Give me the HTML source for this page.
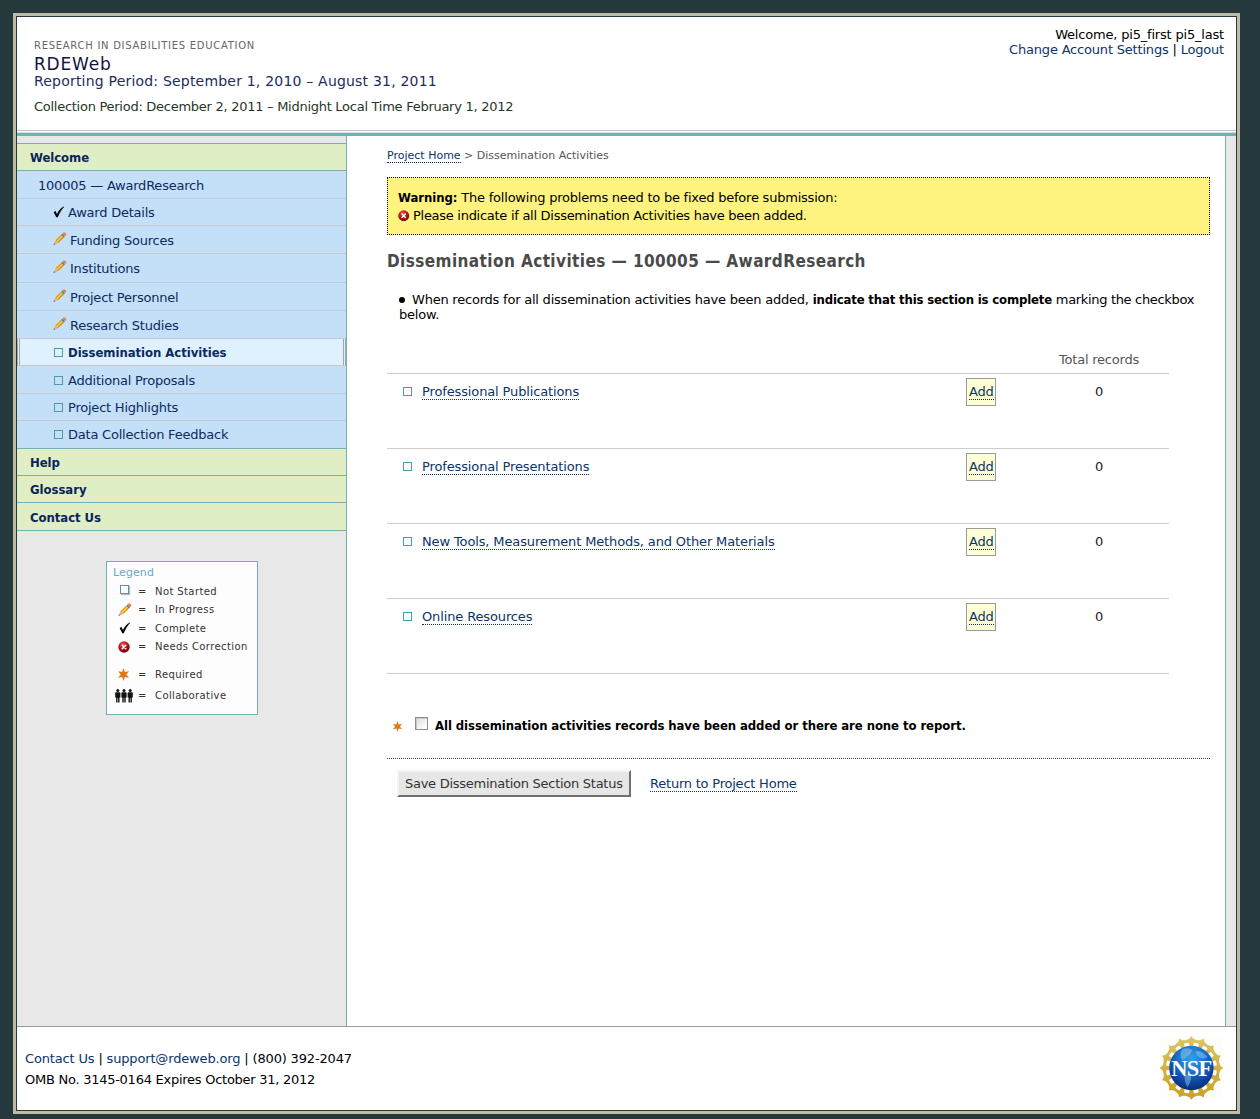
<!DOCTYPE html>
<html lang="en">
<head>
<meta charset="utf-8">
<title>RDEWeb - Dissemination Activities</title>
<style>
html,body{margin:0;padding:0;}
body{background:#25383c;font-family:"DejaVu Sans","Liberation Sans",sans-serif;font-size:13px;color:#000;letter-spacing:-0.22px;width:1260px;height:1119px;overflow:hidden;position:relative;}
.abs{position:absolute;}
a{color:#0b3468;text-decoration:none;}
a.dot{border-bottom:1px dotted #0b3468;}
.b{font-family:"DejaVu Sans Condensed","DejaVu Sans","Liberation Sans",sans-serif;font-weight:bold;font-stretch:condensed;letter-spacing:-0.05px;}
#frame{left:13px;top:13px;width:1221px;height:1095px;border:3px solid #bebca7;background:#fff;}
#frame2{left:16px;top:16px;width:1219px;height:1093px;border:1px solid #25383c;background:#fff;}
.t{white-space:nowrap;line-height:18px;}
/* header */
#h0{left:34px;top:37px;font-size:10px;color:#666;letter-spacing:0.72px;}
#h1{left:34px;top:53px;font-size:17px;color:#14143c;line-height:22px;letter-spacing:0.8px;}
#h2{left:34px;top:71px;font-size:14px;color:#1c2c5c;line-height:20px;letter-spacing:0.2px;}
#h3{left:34px;top:98px;font-size:13px;color:#263626;letter-spacing:-0.27px;}
#u1{right:36px;top:27px;text-align:right;line-height:15px;letter-spacing:-0.19px;}
/* sidebar */
#side{left:17px;top:136px;width:329px;height:890px;background:#e8e8e8;border-right:1px solid #72b0b4;}
.nav{position:absolute;left:17px;width:329px;box-sizing:border-box;}
.nav.g{background:#e0eec6;border-bottom:1px solid #72b0b4;}
.nav.bl{background:#c4e0f8;border-bottom:1px solid #c9c9c9;}
.nav .t{position:absolute;color:#0c2a5e;}
.nav.g .t{left:13px;color:#0a2458;}

.nav.last{border-bottom-color:#72b0b4;}
.nav.act{background:#dff0ff;border-bottom:1px solid #c9c9c9;border-left:3px double #a6a6a6;border-right:3px double #a6a6a6;}
.sq{position:absolute;width:7px;height:7px;border:1px solid #4a9ba2;}

.sq.w{background:#fff;}
.addb{box-sizing:border-box;width:30px;height:28px;border:1px solid #9a9a9a;background:#ffffd6;padding:5px 0 0 2px;line-height:16px;white-space:nowrap;}
.cb{box-sizing:border-box;width:13px;height:13px;border:1px solid #8a8f94;background:linear-gradient(135deg,#dcdcdc 0%,#f4f4f4 60%,#fff 100%);box-shadow:inset 1px 1px 0 #c8c8c8;}
.btn{box-sizing:border-box;width:234px;height:27px;background:#e6e6e6;border:2px solid;border-color:#f4f4f4 #707070 #707070 #f4f4f4;color:#333;padding:4px 0 0 6px;line-height:16px;letter-spacing:-0.27px;}

.lg{font-size:10px;letter-spacing:0.4px;color:#333;}
</style>
</head>
<body>
<div class="abs" id="frame"></div>
<div class="abs" id="frame2"></div>
<!-- HEADER -->
<div class="abs t" id="h0">RESEARCH IN DISABILITIES EDUCATION</div>
<div class="abs t" id="h1">RDEWeb</div>
<div class="abs t" id="h2">Reporting Period: September 1, 2010 – August 31, 2011</div>
<div class="abs t" id="h3">Collection Period: December 2, 2011 – Midnight Local Time February 1, 2012</div>
<div class="abs t" id="u1">Welcome, pi5_first pi5_last<br><a>Change Account Settings</a> | <a>Logout</a></div>
<div class="abs" style="left:17px;top:130px;width:1219px;height:1px;background:#c6c6c6"></div>
<div class="abs" style="left:17px;top:132px;width:1219px;height:1px;background:#dcdcdc"></div>
<div class="abs" style="left:17px;top:133px;width:1219px;height:3px;background:#72b0b4"></div>
<!-- SIDEBAR -->
<div class="abs" id="side"></div>
<!--NAVSTART-->
<div class="abs" style="left:17px;top:143px;width:329px;height:1px;background:#72b0b4"></div>
<div class="nav g" style="top:144px;height:27px"><span class="t b" style="left:13px;top:5px">Welcome</span></div>
<div class="nav bl" style="top:171px;height:28px"><span class="t" style="left:21px;top:6px">100005 — AwardResearch</span></div>
<div class="nav bl" style="top:199px;height:27px"><svg class="abs" style="left:36px;top:7px" width="12" height="12" viewBox="0 0 12 12"><path d="M0.7,6.3 L2.3,4.7 L4.0,7.9 C5.6,4.6 8,2 10.7,0.5 L11.1,1.1 C8.6,3.6 6.5,7 4.8,11.3 L3.3,11.3 Z" fill="#000"/></svg><span class="t" style="left:51px;top:5px">Award Details</span></div>
<div class="nav bl" style="top:226px;height:28px"><svg class="abs" style="left:36px;top:6px" width="14" height="14" viewBox="0 0 14 14"><g transform="translate(0.3,13.1) rotate(-44.5)"><path d="M0,0 L2.2,-0.8 L2.2,0.8 Z" fill="#5f5f5f"/><path d="M2.2,-0.8 L4.9,-1.9 L4.9,1.9 L2.2,0.8 Z" fill="#dfae8c"/><rect x="4.9" y="-1.9" width="8" height="1.3" fill="#f08f0c"/><rect x="4.9" y="-0.6" width="8" height="1.3" fill="#ffd21e"/><rect x="4.9" y="0.7" width="8" height="1.2" fill="#e07f00"/><rect x="12.9" y="-1.9" width="1.5" height="3.8" fill="#3a89a2"/><path d="M14.4,-1.9 L16,-1.9 Q17.1,-1.9 17.1,0 Q17.1,1.9 16,1.9 L14.4,1.9 Z" fill="#f07f40"/></g></svg><span class="t" style="left:53px;top:6px">Funding Sources</span></div>
<div class="nav bl" style="top:254px;height:29px"><svg class="abs" style="left:36px;top:6px" width="14" height="14" viewBox="0 0 14 14"><g transform="translate(0.3,13.1) rotate(-44.5)"><path d="M0,0 L2.2,-0.8 L2.2,0.8 Z" fill="#5f5f5f"/><path d="M2.2,-0.8 L4.9,-1.9 L4.9,1.9 L2.2,0.8 Z" fill="#dfae8c"/><rect x="4.9" y="-1.9" width="8" height="1.3" fill="#f08f0c"/><rect x="4.9" y="-0.6" width="8" height="1.3" fill="#ffd21e"/><rect x="4.9" y="0.7" width="8" height="1.2" fill="#e07f00"/><rect x="12.9" y="-1.9" width="1.5" height="3.8" fill="#3a89a2"/><path d="M14.4,-1.9 L16,-1.9 Q17.1,-1.9 17.1,0 Q17.1,1.9 16,1.9 L14.4,1.9 Z" fill="#f07f40"/></g></svg><span class="t" style="left:53px;top:6px">Institutions</span></div>
<div class="nav bl" style="top:283px;height:28px"><svg class="abs" style="left:36px;top:6px" width="14" height="14" viewBox="0 0 14 14"><g transform="translate(0.3,13.1) rotate(-44.5)"><path d="M0,0 L2.2,-0.8 L2.2,0.8 Z" fill="#5f5f5f"/><path d="M2.2,-0.8 L4.9,-1.9 L4.9,1.9 L2.2,0.8 Z" fill="#dfae8c"/><rect x="4.9" y="-1.9" width="8" height="1.3" fill="#f08f0c"/><rect x="4.9" y="-0.6" width="8" height="1.3" fill="#ffd21e"/><rect x="4.9" y="0.7" width="8" height="1.2" fill="#e07f00"/><rect x="12.9" y="-1.9" width="1.5" height="3.8" fill="#3a89a2"/><path d="M14.4,-1.9 L16,-1.9 Q17.1,-1.9 17.1,0 Q17.1,1.9 16,1.9 L14.4,1.9 Z" fill="#f07f40"/></g></svg><span class="t" style="left:53px;top:6px">Project Personnel</span></div>
<div class="nav bl" style="top:311px;height:28px"><svg class="abs" style="left:36px;top:6px" width="14" height="14" viewBox="0 0 14 14"><g transform="translate(0.3,13.1) rotate(-44.5)"><path d="M0,0 L2.2,-0.8 L2.2,0.8 Z" fill="#5f5f5f"/><path d="M2.2,-0.8 L4.9,-1.9 L4.9,1.9 L2.2,0.8 Z" fill="#dfae8c"/><rect x="4.9" y="-1.9" width="8" height="1.3" fill="#f08f0c"/><rect x="4.9" y="-0.6" width="8" height="1.3" fill="#ffd21e"/><rect x="4.9" y="0.7" width="8" height="1.2" fill="#e07f00"/><rect x="12.9" y="-1.9" width="1.5" height="3.8" fill="#3a89a2"/><path d="M14.4,-1.9 L16,-1.9 Q17.1,-1.9 17.1,0 Q17.1,1.9 16,1.9 L14.4,1.9 Z" fill="#f07f40"/></g></svg><span class="t" style="left:53px;top:6px">Research Studies</span></div>
<div class="nav act" style="top:339px;height:27px"><span class="sq" style="left:34px;top:9px"></span><span class="t b" style="left:48px;top:5px">Dissemination Activities</span></div>
<div class="nav bl" style="top:366px;height:28px"><span class="sq" style="left:37px;top:10px"></span><span class="t" style="left:51px;top:6px">Additional Proposals</span></div>
<div class="nav bl" style="top:394px;height:27px"><span class="sq" style="left:37px;top:9px"></span><span class="t" style="left:51px;top:5px">Project Highlights</span></div>
<div class="nav bl last" style="top:421px;height:28px"><span class="sq" style="left:37px;top:9px"></span><span class="t" style="left:51px;top:5px">Data Collection Feedback</span></div>
<div class="nav g" style="top:449px;height:27px"><span class="t b" style="left:13px;top:5px">Help</span></div>
<div class="nav g" style="top:476px;height:27px"><span class="t b" style="left:13px;top:5px">Glossary</span></div>
<div class="nav g" style="top:503px;height:28px"><span class="t b" style="left:13px;top:6px">Contact Us</span></div>
<!--NAVEND-->
<!--MAINSTART-->
<div class="abs t" style="left:387px;top:147px;font-size:11px;color:#555;letter-spacing:0px"><a class="dot" style="padding-bottom:0">Project Home</a> &gt; Dissemination Activities</div>
<div class="abs" style="left:387px;top:177px;width:821px;height:56px;border:1px dotted #000;background:#fff380"></div>
<div class="abs t" style="left:398px;top:189px"><span class="b">Warning:</span> The following problems need to be fixed before submission:</div>
<svg class="abs" style="left:398px;top:209.5px" width="11.5" height="11.5" viewBox="0 0 12 12"><defs><radialGradient id="rg1" cx="0.4" cy="0.3" r="0.75"><stop offset="0" stop-color="#ee5f60"/><stop offset="0.45" stop-color="#c4141c"/><stop offset="1" stop-color="#5e0006"/></radialGradient></defs><circle cx="6" cy="6" r="5.7" fill="url(#rg1)"/><path d="M4.2,4.2 L7.8,7.8 M7.8,4.2 L4.2,7.8" stroke="#fff" stroke-width="1.5" stroke-linecap="round"/></svg>
<div class="abs t" style="left:413px;top:207px;letter-spacing:-0.28px">Please indicate if all Dissemination Activities have been added.</div>
<div class="abs t b" style="left:387px;top:250px;font-size:17px;line-height:22px;color:#4a4a4a;letter-spacing:0.41px">Dissemination Activities — 100005 — AwardResearch</div>
<div class="abs" style="left:399px;top:297px;width:6px;height:6px;border-radius:3px;background:#000"></div>
<div class="abs t" style="left:412px;top:291px">When records for all dissemination activities have been added, <span class="b" style="letter-spacing:-0.16px">indicate that this section is complete</span><span style="letter-spacing:-0.33px"> marking the checkbox</span></div>
<div class="abs t" style="left:399px;top:306px">below.</div>
<div class="abs t" style="left:1039px;width:120px;text-align:center;top:351px;color:#555">Total records</div>
<div class="abs" style="left:387px;top:373px;width:782px;height:1px;background:#cdcdcd"></div>
<div class="abs" style="left:387px;top:448px;width:782px;height:1px;background:#cdcdcd"></div>
<div class="abs" style="left:387px;top:523px;width:782px;height:1px;background:#cdcdcd"></div>
<div class="abs" style="left:387px;top:598px;width:782px;height:1px;background:#cdcdcd"></div>
<div class="abs" style="left:387px;top:673px;width:782px;height:1px;background:#cdcdcd"></div>
<span class="sq w" style="left:403px;top:387px"></span>
<div class="abs t" style="left:422px;top:383px;letter-spacing:-0.13px"><a class="dot">Professional Publications</a></div>
<div class="abs addb" style="left:966px;top:378px"><a class="dot">Add</a></div>
<div class="abs t" style="left:1079px;width:40px;text-align:center;top:383px;color:#222">0</div>
<span class="sq w" style="left:403px;top:462px"></span>
<div class="abs t" style="left:422px;top:458px;letter-spacing:-0.13px"><a class="dot">Professional Presentations</a></div>
<div class="abs addb" style="left:966px;top:453px"><a class="dot">Add</a></div>
<div class="abs t" style="left:1079px;width:40px;text-align:center;top:458px;color:#222">0</div>
<span class="sq w" style="left:403px;top:537px"></span>
<div class="abs t" style="left:422px;top:533px;letter-spacing:-0.13px"><a class="dot">New Tools, Measurement Methods, and Other Materials</a></div>
<div class="abs addb" style="left:966px;top:528px"><a class="dot">Add</a></div>
<div class="abs t" style="left:1079px;width:40px;text-align:center;top:533px;color:#222">0</div>
<span class="sq w" style="left:403px;top:612px"></span>
<div class="abs t" style="left:422px;top:608px;letter-spacing:-0.13px"><a class="dot">Online Resources</a></div>
<div class="abs addb" style="left:966px;top:603px"><a class="dot">Add</a></div>
<div class="abs t" style="left:1079px;width:40px;text-align:center;top:608px;color:#222">0</div>
<svg class="abs" style="left:392px;top:721px" width="11" height="11" viewBox="-6 -6 12 12"><path d="M0,-5.9 L1.3,-2.2 L5.1,-3 L2.6,0 L5.1,3 L1.3,2.2 L0,5.9 L-1.3,2.2 L-5.1,3 L-2.6,0 L-5.1,-3 L-1.3,-2.2 Z" fill="#df7a1c"/></svg>
<div class="abs cb" style="left:415px;top:717px"></div>
<div class="abs t b" style="left:435px;top:717px;letter-spacing:-0.08px">All dissemination activities records have been added or there are none to report.</div>
<div class="abs" style="left:387px;top:758px;width:823px;height:0;border-top:1px dotted #444"></div>
<div class="abs btn t" style="left:397px;top:770px">Save Dissemination Section Status</div>
<div class="abs t" style="left:650px;top:775px"><a class="dot">Return to Project Home</a></div>
<div class="abs" style="left:1225px;top:136px;width:1px;height:890px;background:#72b0b4"></div>
<div class="abs" style="left:1226px;top:136px;width:10px;height:890px;background:#e8e8e8"></div>
<!--MAINEND-->
<!--FOOTSTART-->
<div class="abs" style="left:106px;top:561px;width:150px;height:152px;border:1px solid #72b0b4;background:#fdfdfd"></div>
<div class="abs t" style="left:113px;top:564px;font-size:11px;color:#6ba7c9;letter-spacing:0.1px">Legend</div>
<div class="abs t lg" style="left:138px;top:583px">=</div>
<div class="abs t lg" style="left:155px;top:583px">Not Started</div>
<div class="abs t lg" style="left:138px;top:601px">=</div>
<div class="abs t lg" style="left:155px;top:601px">In Progress</div>
<div class="abs t lg" style="left:138px;top:620px">=</div>
<div class="abs t lg" style="left:155px;top:620px">Complete</div>
<div class="abs t lg" style="left:138px;top:638px">=</div>
<div class="abs t lg" style="left:155px;top:638px">Needs Correction</div>
<div class="abs t lg" style="left:138px;top:666px">=</div>
<div class="abs t lg" style="left:155px;top:666px">Required</div>
<div class="abs t lg" style="left:138px;top:687px">=</div>
<div class="abs t lg" style="left:155px;top:687px">Collaborative</div>
<span class="sq w" style="left:120px;top:585px;box-shadow:1px 1px 1px #bbb"></span>
<svg class="abs" style="left:118px;top:603px" width="14" height="14" viewBox="0 0 14 14"><g transform="translate(0.3,13.1) rotate(-44.5)"><path d="M0,0 L2.2,-0.8 L2.2,0.8 Z" fill="#5f5f5f"/><path d="M2.2,-0.8 L4.9,-1.9 L4.9,1.9 L2.2,0.8 Z" fill="#dfae8c"/><rect x="4.9" y="-1.9" width="8" height="1.3" fill="#f08f0c"/><rect x="4.9" y="-0.6" width="8" height="1.3" fill="#ffd21e"/><rect x="4.9" y="0.7" width="8" height="1.2" fill="#e07f00"/><rect x="12.9" y="-1.9" width="1.5" height="3.8" fill="#3a89a2"/><path d="M14.4,-1.9 L16,-1.9 Q17.1,-1.9 17.1,0 Q17.1,1.9 16,1.9 L14.4,1.9 Z" fill="#f07f40"/></g></svg>
<svg class="abs" style="left:119px;top:622px" width="12" height="12" viewBox="0 0 12 12"><path d="M0.7,6.3 L2.3,4.7 L4.0,7.9 C5.6,4.6 8,2 10.7,0.5 L11.1,1.1 C8.6,3.6 6.5,7 4.8,11.3 L3.3,11.3 Z" fill="#000"/></svg>
<svg class="abs" style="left:118px;top:641px" width="12" height="12" viewBox="0 0 12 12"><defs><radialGradient id="rg2" cx="0.4" cy="0.3" r="0.75"><stop offset="0" stop-color="#ee5f60"/><stop offset="0.45" stop-color="#c4141c"/><stop offset="1" stop-color="#5e0006"/></radialGradient></defs><circle cx="6" cy="6" r="5.7" fill="url(#rg2)"/><path d="M4.2,4.2 L7.8,7.8 M7.8,4.2 L4.2,7.8" stroke="#fff" stroke-width="1.5" stroke-linecap="round"/></svg>
<svg class="abs" style="left:117px;top:668px" width="13" height="13" viewBox="-6 -6 12 12"><path d="M0,-5.9 L1.3,-2.2 L5.1,-3 L2.6,0 L5.1,3 L1.3,2.2 L0,5.9 L-1.3,2.2 L-5.1,3 L-2.6,0 L-5.1,-3 L-1.3,-2.2 Z" fill="#df7a1c"/></svg>
<svg class="abs" style="left:115px;top:689px" width="18" height="14" viewBox="0 0 18 14" fill="#111"><circle cx="2.8" cy="1.6" r="1.5"/><path d="M0.19999999999999973,4 Q0.19999999999999973,3.3 0.9999999999999998,3.3 L4.6,3.3 Q5.4,3.3 5.4,4 L5.4,8.6 L4.5,8.6 L4.5,13.6 L3.0999999999999996,13.6 L3.0999999999999996,9 L2.5,9 L2.5,13.6 L1.0999999999999999,13.6 L1.0999999999999999,8.6 L0.19999999999999973,8.6 Z"/><circle cx="9" cy="1.6" r="1.5"/><path d="M6.4,4 Q6.4,3.3 7.2,3.3 L10.8,3.3 Q11.6,3.3 11.6,4 L11.6,8.6 L10.7,8.6 L10.7,13.6 L9.3,13.6 L9.3,9 L8.7,9 L8.7,13.6 L7.3,13.6 L7.3,8.6 L6.4,8.6 Z"/><circle cx="15.2" cy="1.6" r="1.5"/><path d="M12.6,4 Q12.6,3.3 13.399999999999999,3.3 L17.0,3.3 Q17.8,3.3 17.8,4 L17.8,8.6 L16.9,8.6 L16.9,13.6 L15.5,13.6 L15.5,9 L14.899999999999999,9 L14.899999999999999,13.6 L13.5,13.6 L13.5,8.6 L12.6,8.6 Z"/></svg>
<div class="abs" style="left:17px;top:1026px;width:1219px;height:1px;background:#999"></div>
<div class="abs" style="left:17px;top:1027px;width:1219px;height:83px;background:#fff"></div>
<div class="abs t" style="left:25px;top:1050px;letter-spacing:-0.16px"><a>Contact Us</a> | <a>support@rdeweb.org</a> | (800) 392-2047</div>
<div class="abs t" style="left:25px;top:1071px;letter-spacing:-0.26px">OMB No. 3145-0164 Expires October 31, 2012</div>
<svg class="abs" style="left:1159px;top:1036px" width="64" height="64" viewBox="-32.4 -32 64 64"><defs><radialGradient id="gl" cx="0.5" cy="0.28" r="0.78"><stop offset="0" stop-color="#36a0e4"/><stop offset="0.35" stop-color="#1f78cc"/><stop offset="0.7" stop-color="#0f459f"/><stop offset="1" stop-color="#0a2470"/></radialGradient><linearGradient id="gd" x1="0" y1="0" x2="0" y2="1"><stop offset="0" stop-color="#dcc467"/><stop offset="1" stop-color="#c9a123"/></linearGradient></defs><rect x="-31.5" y="-31.5" width="63" height="63" fill="#fdfdf9"/><path d="M0.00,-31.80 L2.04,-29.13 L5.55,-27.75 L5.02,-25.10 L2.48,-25.28 L1.72,-21.43 L-1.72,-21.43 L-2.48,-25.28 L-5.02,-25.10 L-5.55,-27.75 L-2.04,-29.13 Z M12.17,-29.38 L13.03,-26.13 L15.74,-23.52 L14.24,-21.27 L11.96,-22.41 L9.79,-19.14 L6.61,-20.46 L7.38,-24.30 L4.97,-25.11 L5.50,-27.76 L9.27,-27.69 Z M22.49,-22.49 L22.04,-19.16 L23.54,-15.70 L21.30,-14.20 L19.63,-16.12 L16.37,-13.93 L13.93,-16.37 L16.12,-19.63 L14.20,-21.30 L15.70,-23.54 L19.16,-22.04 Z M29.38,-12.17 L27.69,-9.27 L27.76,-5.50 L25.11,-4.97 L24.30,-7.38 L20.46,-6.61 L19.14,-9.79 L22.41,-11.96 L21.27,-14.24 L23.52,-15.74 L26.13,-13.03 Z M31.80,0.00 L29.13,2.04 L27.75,5.55 L25.10,5.02 L25.28,2.48 L21.43,1.72 L21.43,-1.72 L25.28,-2.48 L25.10,-5.02 L27.75,-5.55 L29.13,-2.04 Z M29.38,12.17 L26.13,13.03 L23.52,15.74 L21.27,14.24 L22.41,11.96 L19.14,9.79 L20.46,6.61 L24.30,7.38 L25.11,4.97 L27.76,5.50 L27.69,9.27 Z M22.49,22.49 L19.16,22.04 L15.70,23.54 L14.20,21.30 L16.12,19.63 L13.93,16.37 L16.37,13.93 L19.63,16.12 L21.30,14.20 L23.54,15.70 L22.04,19.16 Z M12.17,29.38 L9.27,27.69 L5.50,27.76 L4.97,25.11 L7.38,24.30 L6.61,20.46 L9.79,19.14 L11.96,22.41 L14.24,21.27 L15.74,23.52 L13.03,26.13 Z M0.00,31.80 L-2.04,29.13 L-5.55,27.75 L-5.02,25.10 L-2.48,25.28 L-1.72,21.43 L1.72,21.43 L2.48,25.28 L5.02,25.10 L5.55,27.75 L2.04,29.13 Z M-12.17,29.38 L-13.03,26.13 L-15.74,23.52 L-14.24,21.27 L-11.96,22.41 L-9.79,19.14 L-6.61,20.46 L-7.38,24.30 L-4.97,25.11 L-5.50,27.76 L-9.27,27.69 Z M-22.49,22.49 L-22.04,19.16 L-23.54,15.70 L-21.30,14.20 L-19.63,16.12 L-16.37,13.93 L-13.93,16.37 L-16.12,19.63 L-14.20,21.30 L-15.70,23.54 L-19.16,22.04 Z M-29.38,12.17 L-27.69,9.27 L-27.76,5.50 L-25.11,4.97 L-24.30,7.38 L-20.46,6.61 L-19.14,9.79 L-22.41,11.96 L-21.27,14.24 L-23.52,15.74 L-26.13,13.03 Z M-31.80,0.00 L-29.13,-2.04 L-27.75,-5.55 L-25.10,-5.02 L-25.28,-2.48 L-21.43,-1.72 L-21.43,1.72 L-25.28,2.48 L-25.10,5.02 L-27.75,5.55 L-29.13,2.04 Z M-29.38,-12.17 L-26.13,-13.03 L-23.52,-15.74 L-21.27,-14.24 L-22.41,-11.96 L-19.14,-9.79 L-20.46,-6.61 L-24.30,-7.38 L-25.11,-4.97 L-27.76,-5.50 L-27.69,-9.27 Z M-22.49,-22.49 L-19.16,-22.04 L-15.70,-23.54 L-14.20,-21.30 L-16.12,-19.63 L-13.93,-16.37 L-16.37,-13.93 L-19.63,-16.12 L-21.30,-14.20 L-23.54,-15.70 L-22.04,-19.16 Z M-12.17,-29.38 L-9.27,-27.69 L-5.50,-27.76 L-4.97,-25.11 L-7.38,-24.30 L-6.61,-20.46 L-9.79,-19.14 L-11.96,-22.41 L-14.24,-21.27 L-15.74,-23.52 L-13.03,-26.13 Z" fill="url(#gd)"/><circle r="22.2" fill="url(#gl)"/><path d="M-9,-19 Q-3,-21 1,-18 Q-1,-13 -5,-11 Q-7,-7 -10,-9 Q-12,-14 -9,-19 Z M4,-17 Q11,-18 16,-11 Q12,-8 8,-11 Q5,-12 4,-17 Z M-7,7 Q-2,6 0,10 Q-1,15 -4,19 Q-7,14 -7,7 Z" fill="#9fd2f2" opacity="0.45"/><text x="0" y="7.6" text-anchor="middle" font-family="'Liberation Serif','DejaVu Serif',serif" font-weight="bold" font-size="22.5" fill="#fff" letter-spacing="-0.8">NSF</text></svg>
<!--FOOTEND-->
</body>
</html>
